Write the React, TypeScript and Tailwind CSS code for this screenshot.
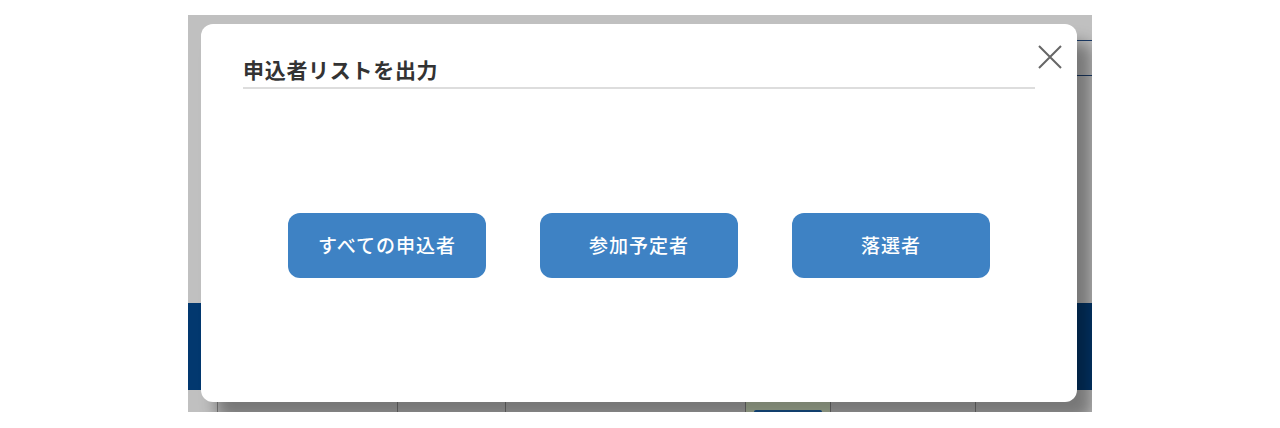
import React from 'react'

const choices = ['すべての申込者', '参加予定者', '落選者']

function CloseIcon() {
    return (
        <svg width="26" height="26" viewBox="0 0 26 26" fill="none" stroke="#666666" strokeWidth="2">
            <path d="M2 2 L24 24 M24 2 L2 24" />
        </svg>
    )
}

export default function App() {
    return (
        <div className="w-[1280px] h-[428px] bg-white pt-[15px] pl-[188px] font-['Noto_Sans_CJK_JP','Noto_Sans',sans-serif]">
            <div className="relative w-[904px] h-[397px] bg-[#c0c0c0] overflow-hidden flex flex-col">
                {/* dimmed page behind the dialog */}
                <div className="h-[25px]" />
                <div className="h-[1px] ml-auto w-[120px] bg-[#1c3d6b]" />
                <div className="h-[34px]" />
                <div className="h-[1px] ml-auto w-[120px] bg-[#1c3d6b]" />
                <div className="h-[227px]" />
                <div className="h-[87px] bg-[#02386f]" />
                <div className="flex h-[22px] bg-[#c0c0c0]">
                    <div className="w-[29px]" />
                    <div className="w-[180px] border-l border-[#808080]" />
                    <div className="w-[108px] border-l border-[#808080]" />
                    <div className="w-[240px] border-l border-[#808080]" />
                    <div className="w-[85px] border-l border-[#808080] bg-[#c6d3b6] flex justify-center items-end">
                        <div className="w-[68px] h-[2px] rounded-t-md bg-[#1b5fa3]" />
                    </div>
                    <div className="w-[145px] border-l border-[#808080]" />
                    <div className="flex-1 border-l border-[#808080]" />
                </div>

                {/* dialog */}
                <div className="absolute left-[13px] top-[9px] w-[876px] h-[378px] bg-white rounded-xl shadow-[15px_18px_16px_rgba(0,0,0,0.38)] flex flex-col px-[42px] pt-[31px]">
                    <h2 className="text-[21px] leading-7 font-bold text-[#333333] tracking-[0.7px] pb-[4px] border-b-2 border-[#dddddd]">
                        申込者リストを出力
                    </h2>
                    <button className="absolute right-[14px] top-[20px]">
                        <CloseIcon />
                    </button>
                    <div className="flex-1 flex items-center justify-center gap-[54px]">
                        {choices.map((label) => (
                            <button
                                key={label}
                                className="w-[198px] h-[65px] rounded-xl bg-[#3e82c4] text-white text-[19px] font-medium tracking-[1px]"
                            >
                                {label}
                            </button>
                        ))}
                    </div>
                </div>
            </div>
        </div>
    )
}
